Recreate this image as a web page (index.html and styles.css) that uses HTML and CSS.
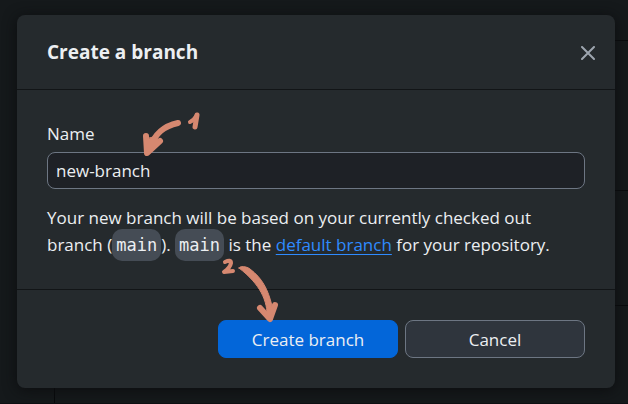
FILE: index.html
```html
<!DOCTYPE html>
<html lang="en">
<head>
<meta charset="utf-8">
<title>Create a branch</title>
<link rel="stylesheet" href="styles.css">
</head>
<body>
<div class="window">
  <div class="backdrop" aria-hidden="true">
    <div class="side"></div>
    <div class="content"><div class="line-top"></div><div class="line-mid"></div><div class="line-low"></div></div>
  </div>
  <form class="dialog" role="dialog" aria-labelledby="title">
    <header class="header">
      <h1 id="title">Create a branch</h1>
      <button class="close" type="button" aria-label="Close">
        <svg width="14" height="14" viewBox="0 0 14 14"><path d="M1 1 13 13M13 1 1 13"/></svg>
      </button>
    </header>
    <div class="fields">
      <label for="name">Name</label>
      <input id="name" type="text" value="new-branch">
      <p>Your new branch will be based on your currently checked out branch (<code>main</code>). <code>main</code> is the <a href="#">default branch</a> for your repository.</p>
    </div>
    <footer class="footer">
      <button class="button primary" type="submit">Create branch</button>
      <button class="button" type="button">Cancel</button>
    </footer>
    <svg class="mark first" width="62" height="50" viewBox="0 0 62 50" aria-hidden="true">
      <path class="thick" d="M37 13C23 16 14 23 9 38"/>
      <path class="thick" d="M5 26 6 43 19 31"/>
      <path class="fill" d="M5 29 7 43 19 31 14 27Z"/>
      <path class="thin" d="M49 12Q53 10 56 5"/>
      <path class="stem" d="M56 5 54 17"/>
    </svg>
    <svg class="mark second" width="62" height="66" viewBox="0 0 62 66" aria-hidden="true">
      <path class="thin" d="M5 2Q11 -1 11 3 10 8 4 12L13 11"/>
      <path class="fill" d="M19 8C20 6 26 6 30 9 42 18 48 29 52 46L51 60 47 58C48 41 40 24 19 8Z"/>
      <path class="thick" d="M40 48 50 59 55 45"/>
      <path class="fill" d="M46 53 50 60 54 49Z"/>
    </svg>
  </form>
</div>
</body>
</html>
```

FILE: styles.css
```css
* {
  box-sizing: border-box;
}

body {
  margin: 0;
  background: #15191b;
  color: #eceff2;
  font-family: "Open Sans", "Noto Sans", sans-serif;
  font-size: 17px;
  line-height: 27px;
}

.window {
  display: grid;
  min-height: 100vh;
}

.backdrop,
.dialog {
  grid-area: 1 / 1;
}

.backdrop {
  display: grid;
  grid-template-columns: 55px 1fr;
  border-bottom: 1px solid #0e1013;
}

.side {
  margin-top: 41px;
  border-right: 1px solid #080a0c;
}

.content {
  display: grid;
  grid-template-rows: 41px 150px 115px;
}

.content div {
  border-bottom: 1px solid #090b0d;
}

.dialog {
  position: relative;
  align-self: start;
  margin: 15px 13px 16px 17px;
  border-radius: 8px;
  background: #252a2d;
  box-shadow: 0 2px 14px #0c0d0f;
}

.header {
  display: flex;
  align-items: center;
  justify-content: space-between;
  padding: 24px 20px 23px 30px;
  border-bottom: 1px solid #121517;
}

h1 {
  margin: 0;
  font-size: 19px;
  font-weight: 700;
  line-height: 27px;
}

.close {
  display: flex;
  padding: 0;
  border: 0;
  background: none;
}

.close path {
  stroke: #9da5af;
  stroke-width: 2;
  stroke-linecap: round;
}

.fields {
  display: grid;
  padding: 30px 30px 31px;
  border-bottom: 1px solid #121517;
}

.fields input {
  width: 100%;
  height: 37px;
  margin-top: 5px;
  padding: 0 8px;
  border: 1px solid #6d7683;
  border-radius: 8px;
  background: #1e2126;
  color: inherit;
  font: inherit;
}

p {
  margin: 15px 0 0;
}

code {
  padding: 6px 4px;
  border-radius: 10px;
  background: #454c55;
  font-family: "DejaVu Sans Mono", monospace;
  font-size: 17px;
  line-height: 20px;
}

a {
  color: #2f8bff;
  text-underline-offset: 3px;
}

.footer {
  display: flex;
  justify-content: flex-end;
  gap: 7px;
  padding: 30px;
}

.button {
  width: 180px;
  height: 38px;
  padding: 0;
  border: 1px solid #6d7683;
  border-radius: 8px;
  background: #2f353d;
  color: inherit;
  font: inherit;
}

.primary {
  border-color: #0366d9;
  background: #0366d9;
}

.mark {
  position: absolute;
  overflow: visible;
  pointer-events: none;
}

.first {
  left: 124px;
  top: 95px;
}

.second {
  left: 203px;
  top: 245px;
}

.mark path {
  fill: none;
  stroke: #d68870;
  stroke-linecap: round;
  stroke-linejoin: round;
}

.mark .thick {
  stroke-width: 6;
}

.mark .thin {
  stroke-width: 4;
}

.mark .stem {
  stroke-width: 5;
}

.mark .fill {
  fill: #d68870;
  stroke-width: 1;
}
```
